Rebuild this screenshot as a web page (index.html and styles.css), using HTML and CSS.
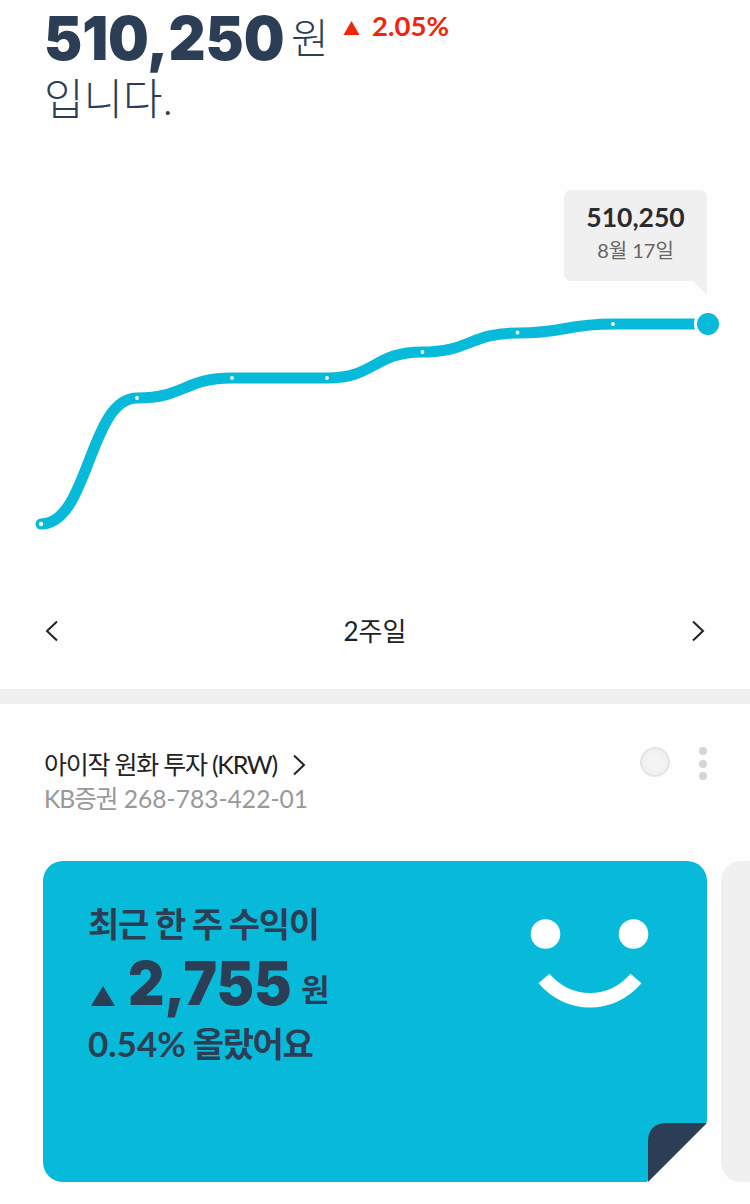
FILE: index.html
```html
<!DOCTYPE html>
<html lang="ko">
<head>
<meta charset="utf-8">
<title>아이작 투자</title>
<link rel="stylesheet" href="styles.css">
</head>
<body>
<main class="screen">
  <header class="summary">
    <div class="summary-row">
      <span class="total">510,250</span><span class="unit">원</span>
      <span class="change"><svg class="change-icon" viewBox="0 0 16 14"><path d="M8 0L16 14H0Z"/></svg>2.05%</span>
    </div>
    <div class="ending">입니다.</div>
  </header>

  <section class="chart">
    <svg class="chart-plot" viewBox="0 0 750 400">
      <path class="line" d="M41 364C89 364 89 238 137 238C185 238 184 218 232 218H327C375 218 374 192 422 192C470 192 470 173 518 173C566 173 565 164 613 164H708"/>
      <g class="points">
        <circle cx="41" cy="364" r="2.2"/><circle cx="137" cy="238" r="1.9"/><circle cx="232" cy="218" r="1.9"/><circle cx="327" cy="218" r="1.9"/><circle cx="422.500" cy="192" r="1.9"/><circle cx="517.500" cy="172.500" r="1.9"/><circle cx="613" cy="164" r="1.9"/>
      </g>
      <circle class="current" cx="708" cy="164" r="12.500"/>
    </svg>
    <div class="tooltip">
      <strong class="tooltip-value">510,250</strong>
      <span class="tooltip-date">8월 17일</span>
      <svg class="tooltip-tail" viewBox="0 0 15 15"><path d="M0 0H15V15Z"/></svg>
    </div>
  </section>

  <nav class="period">
    <svg class="chevron" viewBox="0 0 14 22"><path d="M12 1.500L2 11L12 20.500"/></svg>
    <span class="period-label">2주일</span>
    <svg class="chevron" viewBox="0 0 14 22"><path d="M2 1.500L12 11L2 20.500"/></svg>
  </nav>

  <section class="account">
    <div class="account-info">
      <div class="account-name"><span class="name-text">아이작 원화 투자 (KRW)</span><svg class="chevron" viewBox="0 0 14 22"><path d="M2 1.500L12 11L2 20.500"/></svg></div>
      <div class="account-number"><span class="broker">KB증권</span> 268-783-422-01</div>
    </div>
    <span class="status"></span>
    <span class="more"><i class="dot"></i><i class="dot"></i><i class="dot"></i></span>
  </section>

  <section class="cards">
    <article class="card">
      <div class="card-text">
        <div class="card-title">최근 한 주 수익이</div>
        <div class="profit"><svg class="profit-icon" viewBox="0 0 24 20"><path d="M12 0L24 20H0Z"/></svg><span class="profit-value">2,755</span><span class="profit-unit">원</span></div>
        <div class="card-rate"><span class="rate-value">0.54%</span> 올랐어요</div>
      </div>
      <svg class="smile" viewBox="0 0 120 90">
        <circle cx="15.500" cy="15" r="14.800"/><circle cx="103.500" cy="15" r="14.800"/>
        <path d="M14 59.500C39 88.500 81 88.500 106 59.500"/>
      </svg>
      <svg class="fold" viewBox="0 0 59 59"><path d="M0 59V19Q0 0 19 0H59Z"/></svg>
    </article>
    <article class="card-next"></article>
  </section>
</main>
</body>
</html>
```

FILE: styles.css
```css
* { box-sizing: border-box; }
body { margin: 0; background: #fefefe; font-family: Lato, "Noto Sans CJK KR", sans-serif; color: #222; }
svg { display: block; flex: none; }
.screen { width: 750px; height: 1204px; overflow: hidden; display: flex; flex-direction: column; }

.summary { height: 160px; padding-left: 44px; color: #2b3e55; white-space: nowrap; }
.summary-row { display: flex; height: 74px; }
.total { width: 247px; font: 900 61px/76px Inter, sans-serif; transform: scaleX(.94); transform-origin: left; }
.unit { width: 52px; font-size: 41px; font-weight: 300; line-height: 76px; }
.change { display: flex; align-items: center; gap: 12px; height: 51px; color: #ef2608; font-size: 27.500px; font-weight: 700; }
.change-icon { width: 17px; height: 14px; fill: currentColor; margin-top: 4px; }
.ending { font-size: 43px; font-weight: 300; line-height: 50px; }

.chart { position: relative; height: 400px; }
.chart-plot { width: 750px; height: 400px; }
.line { fill: none; stroke: #08bad9; stroke-width: 11; stroke-linecap: round; }
.points { fill: #fff; }
.current { fill: #08bad9; stroke: #fefefe; stroke-width: 3; }
.tooltip { position: absolute; left: 564px; top: 30px; width: 143px; height: 91px; padding-top: 11px; display: flex; flex-direction: column; align-items: center; border-radius: 7px 7px 0 7px; background: #f0f0f0; }
.tooltip-value { font-size: 26.500px; line-height: 33px; color: #2b2b2d; }
.tooltip-date { font-size: 20px; line-height: 32px; color: #666; }
.tooltip-tail { position: absolute; right: 0; top: 90px; width: 15px; height: 15px; fill: #f0f0f0; }

.period { height: 144px; padding: 12px 45px 0; display: flex; align-items: center; justify-content: space-between; border-bottom: 15px solid #f0f0f0; }
.chevron { width: 14px; height: 22px; fill: none; stroke: #222; stroke-width: 2; }
.period-label { font-size: 26px; line-height: 36px; }

.account { height: 157px; padding: 43px 43px 0 44px; display: flex; align-items: flex-start; }
.account-info { flex: 1; }
.account-name { display: flex; align-items: center; gap: 15px; font-size: 25px; line-height: 35px; }
.name-text { letter-spacing: -1.230px; }
.account-number { font-size: 24.600px; line-height: 34px; color: #999; }
.broker { letter-spacing: -1px; }
.status { width: 30px; height: 30px; border-radius: 50%; border: 2px solid #e4e4e5; background: radial-gradient(#f4f4f4 40%, #ebebec); }
.more { display: flex; flex-direction: column; gap: 4.500px; margin-left: 29px; }
.dot { width: 8px; height: 8px; border-radius: 50%; background: #d5d5d5; }

.cards { display: flex; gap: 14px; }
.card { position: relative; flex: none; width: 664px; height: 321px; margin-left: 43px; padding: 37px 57px 0 45px; display: flex; justify-content: space-between; border-radius: 20px 20px 0 20px; background: linear-gradient(135deg, #08bad9 calc(100% - 43px), transparent calc(100% - 43px)); }
.card-text { color: #2b3e55; white-space: nowrap; font-weight: 700; }
.card-title { font-size: 34px; line-height: 52px; letter-spacing: -1.300px; }
.profit { display: flex; height: 68px; padding-left: 3px; }
.profit-icon { width: 24px; height: 20px; fill: currentColor; margin: 36px 13px 0 0; }
.profit-value { width: 173px; font: 900 60px/67px Inter, sans-serif; transform: scaleX(.94); transform-origin: left; }
.profit-unit { font-size: 31px; font-weight: 700; line-height: 78px; }
.card-rate { font-size: 34px; line-height: 50px; letter-spacing: -1.400px; }
.rate-value { font-size: 35px; letter-spacing: 0; }
.smile { width: 120px; height: 90px; margin-top: 21px; fill: #fff; }
.smile path { fill: none; stroke: #fff; stroke-width: 14.500; }
.fold { position: absolute; right: 0; bottom: 0; width: 59px; height: 59px; fill: #2b3e55; }
.card-next { flex: none; width: 100px; height: 321px; border-radius: 20px; background: #f0f0f0; }
```
